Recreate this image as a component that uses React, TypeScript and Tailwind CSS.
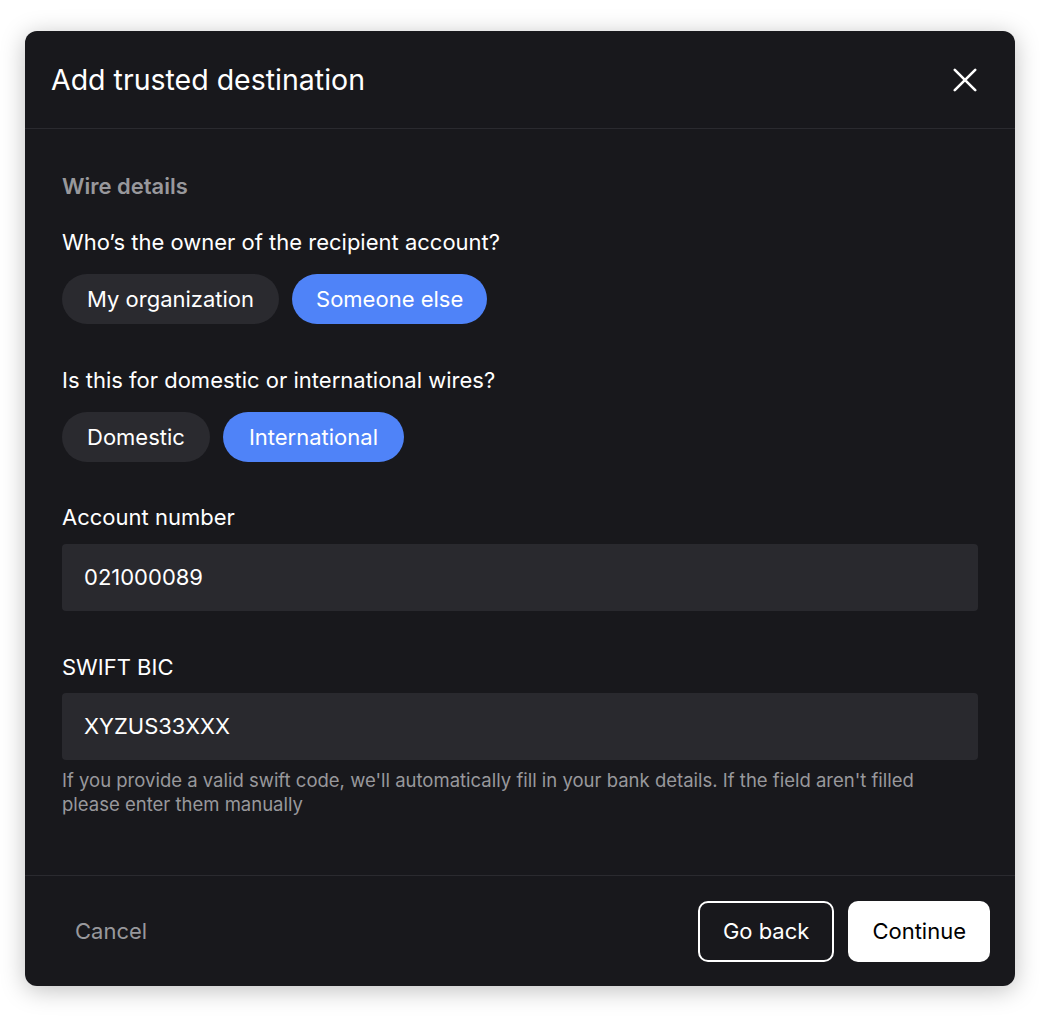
import React from "react";

export default function App() {
  return (
    <div className="w-[1040px] h-[1025px] bg-white" style={{ fontFamily: "Inter, 'Noto Sans', sans-serif" }}>
      <div className="pt-[31px] pl-[25px]">
        <div className="w-[990px] h-[955px] bg-[#18181c] rounded-[12px] shadow-[0_4px_24px_rgba(0,0,0,0.25)] flex flex-col">
          <div className="h-[98px] flex items-center justify-between pl-[26px] pr-[38px] pt-[1px] border-b border-[#2a2a2f]">
            <h1 className="text-[28.5px] text-white font-normal">Add trusted destination</h1>
            <svg width="24" height="24" viewBox="0 0 24 24" fill="none" stroke="white" strokeWidth="2.6" strokeLinecap="round">
              <path d="M1.8 1.8L22.2 22.2M22.2 1.8L1.8 22.2" />
            </svg>
          </div>
          <div className="flex-1 px-[37px] pt-[43px]">
            <div className="text-[22px] font-semibold text-[#98989c] leading-[28px]">Wire details</div>
            <div className="mt-[28px] text-[22px] text-white leading-[28px]">Who’s the owner of the recipient account?</div>
            <div className="mt-[18px] flex gap-[13px]">
              <button className="h-[50px] px-[25px] rounded-full bg-[#2a2a2f] text-white text-[22px]">My organization</button>
              <button className="h-[50px] px-[24px] rounded-full bg-[#4f83f8] text-white text-[22px]">Someone else</button>
            </div>
            <div className="mt-[42px] text-[22px] text-white leading-[28px]">Is this for domestic or international wires?</div>
            <div className="mt-[18px] flex gap-[13px]">
              <button className="h-[50px] px-[25px] rounded-full bg-[#2a2a2f] text-white text-[22px]">Domestic</button>
              <button className="h-[50px] px-[26px] rounded-full bg-[#4f83f8] text-white text-[22px]">International</button>
            </div>
            <div className="mt-[41px] text-[22px] text-white leading-[28px]">Account number</div>
            <div className="mt-[13px] h-[67px] rounded-[4px] bg-[#29292e] flex items-center px-[22px] text-[22px] text-white">021000089</div>
            <div className="mt-[42px] text-[22px] text-white leading-[28px]">SWIFT BIC</div>
            <div className="mt-[12px] h-[67px] rounded-[4px] bg-[#29292e] flex items-center px-[22px] text-[22px] text-white">XYZUS33XXX</div>
            <p className="mt-[8px] max-w-[880px] text-[18.5px] leading-[24px] text-[#98989c]">
              If you provide a valid swift code, we'll automatically fill in your bank details. If the field aren't filled please enter them manually
            </p>
          </div>
          <div className="h-[111px] border-t border-[#2a2a2f] flex items-center justify-between pl-[50px] pr-[25px]">
            <span className="text-[22px] text-[#98989c]">Cancel</span>
            <div className="flex gap-[14px]">
              <button className="h-[61px] px-[23px] rounded-[10px] border-2 border-white text-white text-[22px]">Go back</button>
              <button className="h-[61px] px-[24px] rounded-[10px] bg-white text-black text-[22px]">Continue</button>
            </div>
          </div>
        </div>
      </div>
    </div>
  );
}
